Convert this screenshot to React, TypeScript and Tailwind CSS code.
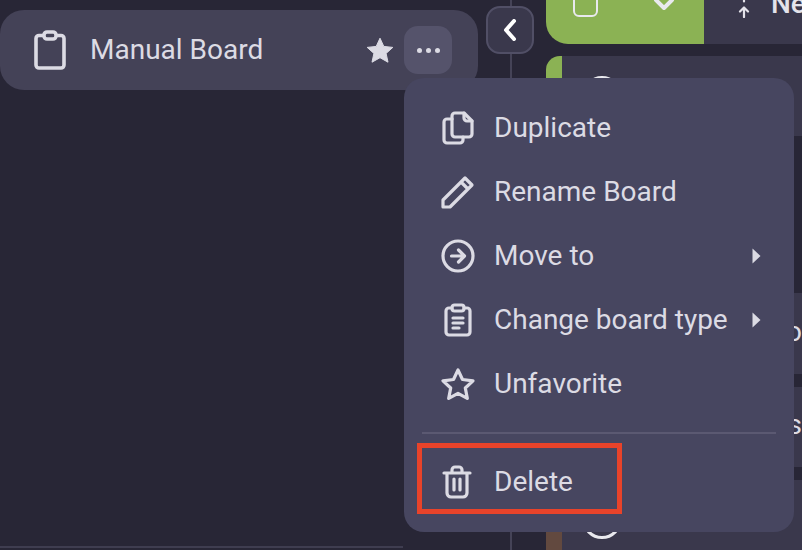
import React from "react";

const stroke = "#dcdbe4";

function Item({ icon, label, arrow }: { icon: React.ReactNode; label: string; arrow?: boolean }) {
  return (
    <div className="flex h-16 items-center pl-[37px] pr-[33px]">
      <div className="flex w-[35px] shrink-0 justify-start">{icon}</div>
      <span className="ml-[18px] grow text-[28px] leading-none text-[#dcdbe4]">{label}</span>
      {arrow && (
        <svg width="10" height="16" viewBox="0 0 10 16" className="shrink-0">
          <path d="M1.5 0.5 9.5 8 1.5 15.5Z" fill={stroke} />
        </svg>
      )}
    </div>
  );
}

const icon = { fill: "none", stroke, strokeWidth: 3.2, strokeLinejoin: "round" as const, strokeLinecap: "round" as const };

export default function App() {
  return (
    <div className="relative flex h-[550px] w-[802px] overflow-hidden bg-[#282636] font-['Roboto','Inter',sans-serif]">
      <aside className="relative flex h-full w-[512px] shrink-0 flex-col border-r-2 border-[#454357]">
        <div className="mt-[10px] flex h-[80px] w-[478px] items-center rounded-[24px] bg-[#444257] pl-[34px] pr-[26px]">
          <svg width="32" height="40" viewBox="0 0 32 40" fill="none" stroke={stroke} strokeWidth="3.6" strokeLinejoin="round">
            <path d="M10 5.5H5a3 3 0 0 0-3 3V35a3 3 0 0 0 3 3h22a3 3 0 0 0 3-3V8.5a3 3 0 0 0-3-3h-5" />
            <rect x="10" y="2" width="12" height="7" rx="3" />
          </svg>
          <span className="ml-[24px] grow text-[28px] leading-none text-[#dcdbe4]">Manual Board</span>
          <svg width="28" height="26" viewBox="0 0 28 26" className="mr-[10px]">
            <path d="M14 1.2 17.8 9.4 26.8 10.4 20.1 16.4 22 25.2 14 20.7 6 25.2 7.9 16.4 1.2 10.4 10.2 9.4Z" fill={stroke} stroke={stroke} strokeLinejoin="round" />
          </svg>
          <div className="flex h-12 w-12 items-center justify-center gap-[4px] rounded-[14px] bg-[#55536b]">
            <span className="h-[5px] w-[5px] rounded-full bg-[#dcdbe4]" />
            <span className="h-[5px] w-[5px] rounded-full bg-[#dcdbe4]" />
            <span className="h-[5px] w-[5px] rounded-full bg-[#dcdbe4]" />
          </div>
        </div>
        <div className="mt-auto mb-[2px] h-[2px] w-[403px] bg-[#3f3d50]" />
        <button className="absolute left-[486px] top-[6px] flex h-12 w-12 items-center justify-center rounded-[14px] border-2 border-[#514f66] bg-[#3a384c]">
          <svg width="14" height="22" viewBox="0 0 14 22" fill="none" stroke="#ffffff" strokeWidth="4" strokeLinecap="round" strokeLinejoin="round">
            <path d="M11 2 3 11 11 20" />
          </svg>
        </button>
      </aside>

      <main className="flex min-w-0 grow flex-col overflow-hidden pl-[34px]">
        <div className="flex h-[44px] shrink-0">
          <div className="relative flex w-[158px] shrink-0 rounded-bl-[22px] bg-[#8bb254]">
            <div className="absolute left-[27px] top-[-10px] h-[27px] w-[25px] rounded-[6px] border-2 border-[#e9e9ee]" />
            <svg width="24" height="14" viewBox="0 0 24 14" className="absolute left-[106px] top-0" fill="none" stroke="#e9e9ee" strokeWidth="4" strokeLinecap="round" strokeLinejoin="round">
              <path d="M4 0 12 8 20 0" />
            </svg>
          </div>
          <div className="flex min-w-0 grow items-start bg-[#3a384c]">
            <svg width="14" height="18" viewBox="0 0 14 18" className="ml-[33px] shrink-0" fill="none" stroke="#e4e3ea" strokeWidth="2.2" strokeLinecap="round" strokeLinejoin="round">
              <path d="M7 0.5V1.5M7 8V17M3 11.5 7 7.5 11 11.5" />
            </svg>
            <span className="ml-[20px] mt-[-10px] shrink-0 text-[28px] leading-[28px] font-medium text-[#e4e3ea]">Ne</span>
          </div>
        </div>
        <div className="mt-[12px] flex h-[80px] shrink-0">
          <div className="w-4 rounded-tl-[14px] bg-[#8bb254]" />
          <div className="grow bg-[#3a384c] pl-[20px] pt-[20px]">
            <div className="h-10 w-10 rounded-full border-[3px] border-[#e9e9ee]" />
          </div>
        </div>
        <div className="mt-[157px] flex h-[81px] shrink-0 justify-end bg-[#3a384c]">
          <span className="mt-[25px] text-[28px] leading-none text-[#dcdbe4]">o</span>
        </div>
        <div className="mt-[13px] flex h-[80px] shrink-0 justify-end bg-[#3a384c]">
          <span className="mt-[24px] text-[28px] leading-none text-[#dcdbe4]">s</span>
        </div>
        <div className="mt-[13px] flex grow">
          <div className="w-4 rounded-t-[4px] bg-[#62493f]" />
          <div className="grow bg-[#3a384c] pl-[20px] pt-[19px]">
            <div className="h-10 w-10 rounded-full border-[3px] border-[#e9e9ee]" />
          </div>
        </div>
      </main>

      <div className="absolute left-[404px] top-[78px] h-[454px] w-[390px] rounded-[20px] bg-[#474660]">
        <div className="pt-[18px]">
          <Item label="Duplicate" icon={
            <svg width="32" height="34" viewBox="0 0 32 34" {...icon} className="ml-[1px]">
              <path d="M10 8H5a3 3 0 0 0-3 3v18a3 3 0 0 0 3 3h13a3 3 0 0 0 3-3v-3" />
              <path d="M10 5a3 3 0 0 1 3-3h9l8 8v13a3 3 0 0 1-3 3H13a3 3 0 0 1-3-3Z" />
              <path d="M22 2v5a3 3 0 0 0 3 3h5" />
            </svg>} />
          <Item label="Rename Board" icon={
            <svg width="34" height="34" viewBox="0 0 34 34" {...icon}>
              <path d="M2 32V25L24 3 31 10 9 32ZM20 7 27 14" />
            </svg>} />
          <Item label="Move to" arrow icon={
            <svg width="34" height="34" viewBox="0 0 34 34" {...icon}>
              <circle cx="17" cy="17" r="15" />
              <path d="M10.5 17H23M17.5 11 23.5 17 17.5 23" />
            </svg>} />
          <Item label="Change board type" arrow icon={
            <svg width="28" height="34" viewBox="0 0 28 34" {...icon} className="ml-[3px]">
              <path d="M8 5H5a3 3 0 0 0-3 3v21a3 3 0 0 0 3 3h18a3 3 0 0 0 3-3V8a3 3 0 0 0-3-3h-3" />
              <rect x="8" y="2" width="12" height="6" rx="2.5" />
              <path d="M9 15H19M9 20H19M9 25H15" />
            </svg>} />
          <Item label="Unfavorite" icon={
            <svg width="34" height="32" viewBox="0 0 34 32" {...icon}>
              <path d="M17 2 21.5 11.5 32 12.8 24.3 20 26.3 30.4 17 25.3 7.7 30.4 9.7 20 2 12.8 12.5 11.5Z" />
            </svg>} />
        </div>
        <div className="mx-[18px] mt-[16px] h-[2px] bg-[#5b5972]" />
        <div className="mt-[16px]">
          <Item label="Delete" icon={
            <svg width="30" height="34" viewBox="0 0 30 34" {...icon} className="ml-[1px]">
              <path d="M2 8H28M10 8V5a3 3 0 0 1 3-3h4a3 3 0 0 1 3 3v3M5 8V28a4 4 0 0 0 4 4H21a4 4 0 0 0 4-4V8M12 14V25M18 14V25" />
            </svg>} />
        </div>
        <div className="absolute left-[13px] top-[365px] h-[71px] w-[205px] border-[5px] border-[#e8432a]" />
      </div>
    </div>
  );
}
